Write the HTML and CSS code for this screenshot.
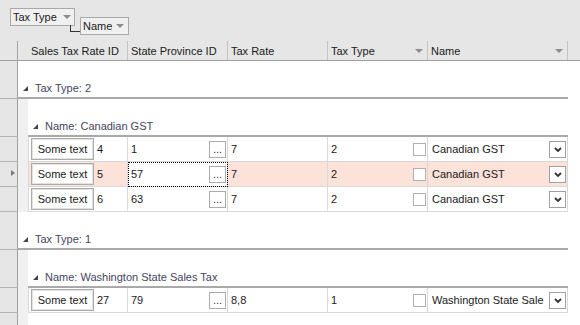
FILE: index.html
```html
<!DOCTYPE html>
<html lang="en">
<head>
    <meta charset="UTF-8">
    <meta name="viewport" content="width=device-width, initial-scale=1.0">
    <title>Sales Tax Rates</title>
    <link rel="stylesheet" href="styles.css">
</head>
<body>
    <div class="group-panel">
        <div class="chip chip-tax">Tax Type<span class="chip-arrow"></span></div>
        <div class="chip chip-name">Name<span class="chip-arrow"></span></div>
    </div>

    <div class="header">
        <div class="ind"></div>
        <div class="hcell h1">Sales Tax Rate ID</div>
        <div class="hcell">State Province ID</div>
        <div class="hcell">Tax Rate</div>
        <div class="hcell">Tax Type<span class="sort-arrow"></span></div>
        <div class="hcell h5">Name<span class="sort-arrow"></span></div>
    </div>

    <div class="grid">
        <div class="row row-group">
            <div class="ind"></div>
            <div class="group group-l1"><span class="expander"></span>Tax Type: 2</div>
        </div>
        <div class="row row-group">
            <div class="ind"></div>
            <div class="indent"></div>
            <div class="group group-l2"><span class="expander"></span>Name: Canadian GST</div>
        </div>

        <div class="row row-data">
            <div class="ind"></div>
            <div class="indent"></div>
            <div class="cell c1"><button class="btn-text">Some text</button><span class="id">4</span></div>
            <div class="cell c2">1<button class="btn-dots">...</button></div>
            <div class="cell c3">7</div>
            <div class="cell c4">2<span class="check"></span></div>
            <div class="cell c5"><span class="name">Canadian GST</span><button class="btn-drop"><svg width="8" height="5" viewBox="0 0 8 5"><polyline points="1,1 4,4 7,1" fill="none" stroke="#333" stroke-width="1.8"/></svg></button></div>
        </div>
        <div class="row row-data row-sel">
            <div class="ind ind-current"></div>
            <div class="indent"></div>
            <div class="cell c1"><button class="btn-text">Some text</button><span class="id">5</span></div>
            <div class="cell c2 focused">57<button class="btn-dots">...</button></div>
            <div class="cell c3">7</div>
            <div class="cell c4">2<span class="check"></span></div>
            <div class="cell c5"><span class="name">Canadian GST</span><button class="btn-drop"><svg width="8" height="5" viewBox="0 0 8 5"><polyline points="1,1 4,4 7,1" fill="none" stroke="#333" stroke-width="1.8"/></svg></button></div>
        </div>
        <div class="row row-data">
            <div class="ind"></div>
            <div class="indent"></div>
            <div class="cell c1"><button class="btn-text">Some text</button><span class="id">6</span></div>
            <div class="cell c2">63<button class="btn-dots">...</button></div>
            <div class="cell c3">7</div>
            <div class="cell c4">2<span class="check"></span></div>
            <div class="cell c5"><span class="name">Canadian GST</span><button class="btn-drop"><svg width="8" height="5" viewBox="0 0 8 5"><polyline points="1,1 4,4 7,1" fill="none" stroke="#333" stroke-width="1.8"/></svg></button></div>
        </div>

        <div class="row row-group">
            <div class="ind"></div>
            <div class="group group-l1"><span class="expander"></span>Tax Type: 1</div>
        </div>
        <div class="row row-group">
            <div class="ind"></div>
            <div class="indent"></div>
            <div class="group group-l2"><span class="expander"></span>Name: Washington State Sales Tax</div>
        </div>

        <div class="row row-data">
            <div class="ind"></div>
            <div class="indent"></div>
            <div class="cell c1"><button class="btn-text">Some text</button><span class="id">27</span></div>
            <div class="cell c2">79<button class="btn-dots">...</button></div>
            <div class="cell c3">8,8</div>
            <div class="cell c4">1<span class="check"></span></div>
            <div class="cell c5"><span class="name" title="Washington State Sales Tax">Washington State Sale</span><button class="btn-drop"><svg width="8" height="5" viewBox="0 0 8 5"><polyline points="1,1 4,4 7,1" fill="none" stroke="#333" stroke-width="1.8"/></svg></button></div>
        </div>

        <div class="row row-fill">
            <div class="ind"></div>
            <div class="indent"></div>
        </div>
    </div>
</body>
</html>
```

FILE: styles.css
```css
* {
    box-sizing: border-box;
}
body {
    margin: 0;
    height: 325px;
    overflow: hidden;
    display: flex;
    flex-direction: column;
    background: #fff;
    font-family: "Liberation Sans", Arial, sans-serif;
    font-size: 11px;
    color: #1a1a1a;
}

/* group-by panel */
.group-panel {
    height: 41px;
    flex: none;
    display: flex;
    align-items: flex-start;
    padding: 8px 0 0 10px;
    background: #e6e6e6;
}
.chip {
    position: relative;
    height: 18px;
    display: flex;
    align-items: center;
    padding: 0 3px 0 2px;
    border: 1px solid #a9a9a9;
    background: #f0f0f0;
    color: #1a1a1a;
}
.chip-tax {
    width: 65px;
}
.chip-tax::after {
    content: "";
    position: absolute;
    left: 59px;
    top: 100%;
    width: 11px;
    height: 6px;
    border-left: 1px solid #333;
    border-bottom: 1px solid #333;
}
.chip-name {
    width: 49px;
    margin: 9px 0 0 5px;
    padding-right: 4px;
}
.chip-arrow,
.sort-arrow {
    margin-left: auto;
    width: 0;
    height: 0;
    border-left: 4px solid transparent;
    border-right: 4px solid transparent;
    border-top: 4px solid #8c8c8c;
}

/* column headers */
.header {
    height: 20px;
    flex: none;
    display: flex;
    background: #e6e6e6;
    border-bottom: 1px solid #a0a0a0;
}
.header .ind {
    border-bottom: none;
}
.hcell {
    width: 100px;
    height: 19px;
    display: flex;
    align-items: center;
    padding: 1px 4px 0 3px;
    border-right: 1px solid #c4c4c4;
}
.h1 {
    width: 110px;
    padding-left: 13px;
}
.h5 {
    width: 140px;
}

/* rows */
.grid {
    flex: 1;
    display: flex;
    flex-direction: column;
}
.row {
    display: flex;
    flex: none;
}
.ind {
    position: relative;
    width: 18px;
    flex: none;
    background: #e6e6e6;
    border-right: 1px solid #a0a0a0;
    border-bottom: 1px solid #b4b4b4;
}
.ind-current::after {
    content: "";
    position: absolute;
    left: 11px;
    top: 8px;
    border-left: 4px solid #7a7a7a;
    border-top: 3px solid transparent;
    border-bottom: 3px solid transparent;
}
.indent {
    width: 10px;
    flex: none;
    background: #f0f0f0;
}
.row-group {
    height: 38px;
}
.group {
    height: 38px;
    display: flex;
    align-items: center;
    padding: 18px 0 0 5px;
    line-height: 14px;
    border-bottom: 2px solid #a9a9a9;
    color: #45455e;
}
.group-l1 {
    width: 550px;
}
.group-l2 {
    width: 540px;
}
.expander {
    width: 0;
    height: 0;
    margin-right: 7px;
    border-left: 5px solid transparent;
    border-bottom: 5px solid #444;
}

.row-data {
    height: 25px;
}
.cell {
    width: 100px;
    height: 25px;
    display: flex;
    align-items: center;
    padding-left: 3px;
    border-right: 1px solid #d9d9d9;
    border-bottom: 1px solid #d9d9d9;
    white-space: nowrap;
}
.c1 {
    border-left: 1px solid #d9d9d9;
    padding-left: 2px;
}
.c5 {
    width: 140px;
    padding-left: 4px;
}
.row-sel .cell {
    background: #fde2da;
}
.row-sel .focused {
    background: #fff;
    outline: 1px dotted #000;
    outline-offset: -1px;
}
.id {
    margin-left: 3px;
}
.name {
    flex: 1;
}

/* in-cell editors */
button {
    font: inherit;
    color: #1a1a1a;
    padding: 0;
    background: #fff;
    border: 1px solid #ababab;
}
.btn-text {
    width: 63px;
    height: 22px;
    box-shadow: inset 0 0 0 1px #e2e2e2;
}
.btn-dots {
    width: 17px;
    height: 17px;
    margin: 0 1px 0 auto;
    line-height: 13px;
    color: #2a1f5a;
}
.check {
    width: 13px;
    height: 13px;
    margin: 0 1px 0 auto;
    border: 1px solid #b0b0b0;
    background: #fff;
}
.btn-drop {
    width: 17px;
    height: 17px;
    flex: none;
    margin: 0 1px 0 2px;
    display: flex;
    align-items: center;
    justify-content: center;
    border-color: #a0a0a0;
}

.row-fill {
    flex: 1;
}
.row-fill .ind {
    border-bottom: none;
}
```
